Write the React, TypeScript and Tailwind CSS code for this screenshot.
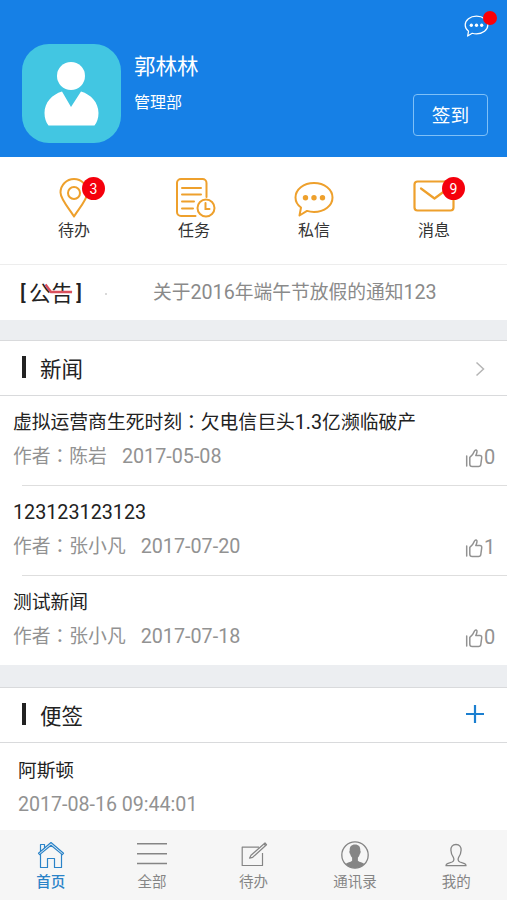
import React, { JSX, ReactNode } from 'react';
import cx from 'clsx';

type NewsType = {
  title: string;
  author: string;
  date: string;
  likes: number;
};

const news: NewsType[] = [
  { title: '虚拟运营商生死时刻：欠电信巨头1.3亿濒临破产', author: '陈岩', date: '2017-05-08', likes: 0 },
  { title: '123123123123', author: '张小凡', date: '2017-07-20', likes: 1 },
  { title: '测试新闻', author: '张小凡', date: '2017-07-18', likes: 0 },
];

// Latin runs are set slightly larger than the Chinese around them
const Mixed = ({ text }: { text: string }): JSX.Element => (
  <>
    {text.split(/([\x21-\x7e]+|：)/).map((part, i) => {
      if (part === '：') {
        return <span key={i} className="font-['Noto_Sans_CJK_TC',sans-serif] leading-[0]" lang="zh-TW">{part}</span>;
      }
      return /^[\x21-\x7e]+$/.test(part) ? <span key={i} className="text-[1.05em] leading-[0]">{part}</span> : part;
    })}
  </>
);

const ChatIcon = ({ className, strokeWidth = 2 }: { className: string; strokeWidth?: number }) => (
  <svg className={className} viewBox="0 0 40 36" fill="none" stroke="currentColor" strokeWidth={strokeWidth} strokeLinejoin="round">
    <path d="M7 26.500C3.500 24 1.500 20 1.500 16.500 1.500 8.500 9.500 2 20 2s18.500 6.500 18.500 14.500S30.500 31 20 31c-2.500 0-5-.4-7-1.100L5.500 34.500z" />
    <g fill="currentColor" stroke="none">
      <circle cx="11.500" cy="16.800" r="2.700" />
      <circle cx="20" cy="16.800" r="2.700" />
      <circle cx="28.500" cy="16.800" r="2.700" />
    </g>
  </svg>
);

const PinIcon = () => (
  <svg className="h-[40px] w-[30px]" viewBox="0 0 30 40" fill="none" stroke="currentColor" strokeWidth="2" strokeLinejoin="round">
    <path d="M15 38.500C12 33 1.500 21.500 1.500 14.500a13.500 13.500 0 0 1 27 0C28.500 21.500 18 33 15 38.500z" />
    <circle cx="15" cy="15" r="6" />
  </svg>
);

const TaskIcon = () => (
  <svg className="h-[40px] w-[42px]" viewBox="0 0 42 40" fill="none" stroke="currentColor" strokeWidth="2" strokeLinecap="round">
    <path d="M21.500 38H7a4 4 0 0 1-4-4V5a4 4 0 0 1 4-4h21.500a4 4 0 0 1 4 4v14" />
    <path d="M8 10h19M8 16.500h19M8 23.500h12M8 30.500h11" />
    <circle cx="32" cy="30" r="8.500" />
    <path d="M31.500 25v6h4" />
  </svg>
);

const MailIcon = () => (
  <svg className="h-[40px] w-[42px]" viewBox="0 0 42 40" fill="none" stroke="currentColor" strokeWidth="2.200" strokeLinejoin="round">
    <rect x="1.500" y="3.500" width="39" height="29" rx="3" />
    <path d="M8 10.500l13.500 10L35 10.500" strokeLinecap="round" />
  </svg>
);

const ThumbIcon = () => (
  <svg className="mt-[2px] h-[20px] w-[18px]" viewBox="0 0 18 20" fill="none" stroke="currentColor" strokeWidth="1.500" strokeLinejoin="round" strokeLinecap="round">
    <path d="M1.700 8v10M4.800 9.300C7 7.700 8.500 5.700 9.500 3c.9-1.800 2.800-1.200 2.500.8-.1 1.300-.7 2.500-1.200 3.700h4c1.600 0 2.100 1 1.900 2.300l-.9 6.700c-.2 1.400-1 2-2.300 2H7.300c-1.500 0-2.500-1-2.500-2.300z" />
  </svg>
);

const shortcuts: { label: string; icon: ReactNode; badge?: number; badgeClass?: string }[] = [
  { label: '待办', icon: <PinIcon />, badge: 3, badgeClass: 'left-[23px]' },
  { label: '任务', icon: <span className="ml-[2px]"><TaskIcon /></span> },
  { label: '私信', icon: <ChatIcon className="mt-[3px] h-[36px] w-[40px]" /> },
  { label: '消息', icon: <MailIcon />, badge: 9, badgeClass: 'left-[29px]' },
];

const HomeIcon = () => (
  <svg className="h-[28px] w-[28px]" viewBox="0 0 28 28" fill="none" stroke="currentColor" strokeWidth="1.200" strokeLinejoin="round">
    <path d="M1.500 12.300L14 1.500l12.500 10.800-1.200 1.300L14 4.200 2.700 13.600zM3.500 10V3.500h4V7" />
    <path d="M3.500 13v13.500h7V17.500h7v9h7V13" />
  </svg>
);

const EditIcon = () => (
  <svg className="h-[28px] w-[28px]" viewBox="0 0 28 28" fill="none" stroke="currentColor" strokeWidth="1.200" strokeLinejoin="round">
    <path d="M19 6.200H2.200v18.300h20.300V12" />
    <path d="M11 14.300L25 2l1.500 1.700L12.700 16.300l-3.200.9z" />
    <path d="M24 2.700l1.700 1.800" strokeWidth="1.500" />
  </svg>
);

const ContactsIcon = () => (
  <svg className="h-[28px] w-[28px]" viewBox="0 0 28 28">
    <circle cx="14" cy="14" r="13.200" fill="none" stroke="currentColor" strokeWidth="1.300" />
    <path fill="currentColor" d="M14 3.500c-4 0-5.500 2.500-5.300 6.200-.7.300-.3 2.600.4 3 .4 2 1.200 3 2 3.900v3.100c-1.600 1.500-4.700 1.700-6.600 3.300a13 13 0 0 0 19 0c-1.900-1.600-5-1.800-6.600-3.300v-3.100c.8-.9 1.600-1.900 2-3.900.7-.4 1.100-2.700.4-3C19.500 6 18 3.500 14 3.500z" />
  </svg>
);

const MeIcon = () => (
  <svg className="h-[28px] w-[28px]" viewBox="0 0 28 28" fill="none" stroke="currentColor" strokeWidth="1.300" strokeLinejoin="round">
    <path d="M14 3.500c-3.500 0-5.300 2.300-5.100 5.800.1 3.600 1.400 5.700 2.600 7.400.8 1.500.4 3.500-1.500 4.300l-4.500 1.700c-1 .4-1.500 1-1.500 2h20c0-1-.5-1.600-1.500-2L18 21c-1.900-.8-2.300-2.800-1.500-4.300 1.200-1.700 2.500-3.800 2.600-7.400.2-3.500-1.600-5.800-5.100-5.800z" />
  </svg>
);

const MenuIcon = () => (
  <svg className="h-[28px] w-[30px]" viewBox="0 0 30 28" stroke="currentColor" strokeWidth="1.500">
    <path d="M0 2.800h30M0 12.700h30M0 22.500h30" />
  </svg>
);

const tabs = [
  { label: '首页', icon: <HomeIcon />, active: true },
  { label: '全部', icon: <MenuIcon /> },
  { label: '待办', icon: <EditIcon /> },
  { label: '通讯录', icon: <ContactsIcon /> },
  { label: '我的', icon: <MeIcon /> },
];

const SectionHeader = ({ title, children }: { title: string; children: ReactNode }) => (
  <div className="flex h-[56px] items-center border-y border-[#d9dadc] pr-[21px] pl-[22px]">
    <span className="mb-[3px] h-[22px] w-[4px] bg-[#222]" />
    <h2 className="mt-[3px] ml-[14px] flex-1 text-[21.500px] text-[#222]">{title}</h2>
    {children}
  </div>
);

const App: React.FunctionComponent = (): JSX.Element => {
  return (
    <div lang="zh-CN" className="flex h-[900px] w-[507px] flex-col overflow-hidden bg-white font-[Roboto,'Noto_Sans_CJK_SC',sans-serif] leading-none">
      {/* Profile */}
      <header className="flex h-[157px] shrink-0 bg-[#1680e6] pl-[22px] text-white">
        <svg className="mt-[44px] h-[99px] w-[99px] rounded-[27px] bg-[#42c6e2]" viewBox="0 0 99 99" fill="#fff">
          <circle cx="49" cy="32" r="14" />
          <path d="M40 47.500L49 63l10-15.500c10 3 17.500 11 17.500 21.500 0 5-1.500 9.500-4 12.500h-46c-2.500-3-4-7.500-4-12.500 0-10.500 7.500-18.500 17.500-21.500z" />
        </svg>
        <div className="ml-[13px] flex-1 pt-[56px]">
          <div className="text-[21.500px]">郭林林</div>
          <div className="mt-[17px] text-[16px]">管理部</div>
        </div>
        <div className="mr-[19px] flex flex-col items-end">
          <div className="relative mt-[15px] mr-[-1px]">
            <ChatIcon className="h-[22px] w-[25px]" />
            <span className="absolute top-[-4px] left-[19px] h-[14px] w-[14px] rounded-full bg-[#fb0007]" />
          </div>
          <button className="mt-[57px] h-[42px] w-[75px] rounded-[4px] border border-[#7fc0f7] pt-[2px] text-[18.700px]">签到</button>
        </div>
      </header>

      {/* Shortcuts */}
      <nav className="flex h-[108px] shrink-0 border-b border-[#ededed] pt-[21px] pr-[13px] pl-[14px]">
        {shortcuts.map((item) => (
          <div key={item.label} className="flex flex-1 flex-col items-center">
            <div className="relative flex h-[40px] text-[#eea02c]">
              {item.icon}
              {item.badge && (
                <span className={cx('absolute -top-px flex h-[23px] w-[23px] items-center justify-center rounded-full bg-[#f5000c] text-[14px] text-white', item.badgeClass)}>
                  {item.badge}
                </span>
              )}
            </div>
            <span className="mt-[5px] text-[16px] text-[#333]">{item.label}</span>
          </div>
        ))}
      </nav>

      {/* Notice */}
      <div className="flex h-[55px] shrink-0 items-center pt-[2px] pl-[20px]">
        <div className="relative flex w-[62px] justify-between text-[21px] whitespace-nowrap text-[#222]">
          <span className="font-medium">[</span>
          <span className="-mx-[2px] text-[22px]">公告</span>
          <span className="font-medium">]</span>
          <svg className="absolute top-0 left-0 h-[21px] w-[62px]" viewBox="0 0 62 21" fill="none" stroke="#d9505c" strokeWidth="2.400">
            <path d="M25.500 1.500l5.500 7.500h21" />
          </svg>
        </div>
        <span className="ml-[23px] h-[2px] w-[2px] rounded-full bg-[#ccc]" />
        <span className="ml-[46px] text-[18.750px] whitespace-nowrap text-[#8a8a8a]"><Mixed text="关于2016年端午节放假的通知123" /></span>
      </div>

      <div className="h-[20px] shrink-0 bg-[#eceef1]" />

      {/* News */}
      <section className="shrink-0">
        <SectionHeader title="新闻">
          <svg className="mt-[2px] h-[16px] w-[12px]" viewBox="0 0 12 16" fill="none" stroke="#b5b5b5" strokeWidth="1.500"><path d="M2.500 1.500L9.500 8l-7 6.500" /></svg>
        </SectionHeader>
        {news.map((item, i) => (
          <div key={i}>
            {i > 0 && <div className="ml-[22px] h-px bg-[#dedede]" />}
            <div className="flex h-[89px] items-end justify-between pr-[11px] pb-[18px] pl-[13px] whitespace-nowrap">
              <div>
                <h3 className="h-[19px] text-[18.800px] leading-[19px] text-[#222]"><Mixed text={item.title} /></h3>
                <p className="mt-[15px] flex h-[19px] text-[18.800px] leading-[19px] text-[#929292]">
                  <span><Mixed text={'作者：' + item.author} /></span>
                  <span className="ml-[15px]"><Mixed text={item.date} /></span>
                </p>
              </div>
              <div className="flex h-[20px] w-[31px] items-center text-[20px] text-[#929292]">
                <ThumbIcon />
                <span className="ml-px">{item.likes}</span>
              </div>
            </div>
          </div>
        ))}
      </section>

      <div className="h-[22px] shrink-0 bg-[#eceef1]" />

      {/* Notes */}
      <section className="flex-1">
        <SectionHeader title="便签">
          <svg className="mr-px mb-[3px] h-[20px] w-[20px]" viewBox="0 0 20 20" stroke="#1b7fd0" strokeWidth="2.200"><path d="M10 1v18M1 10h18" /></svg>
        </SectionHeader>
        <div className="pt-[19px] pl-[18px] text-[18.700px] leading-[19px]">
          <h3 className="text-[#222]">阿斯顿</h3>
          <p className="mt-[15px] text-[#929292]"><Mixed text="2017-08-16 09:44:01" /></p>
        </div>
      </section>

      {/* Tab bar */}
      <footer className="flex h-[70px] shrink-0 bg-[#f6f6f6] pt-[11px]">
        {tabs.map((tab) => (
          <div key={tab.label} className={cx('flex flex-1 flex-col items-center text-[14.500px]', tab.active ? 'text-[#2a83c8]' : 'text-[#858585]')}>
            {tab.icon}
            <span className={cx('mt-[7px]', { 'font-medium': tab.active })}>{tab.label}</span>
          </div>
        ))}
      </footer>
    </div>
  );
};

export default App;
